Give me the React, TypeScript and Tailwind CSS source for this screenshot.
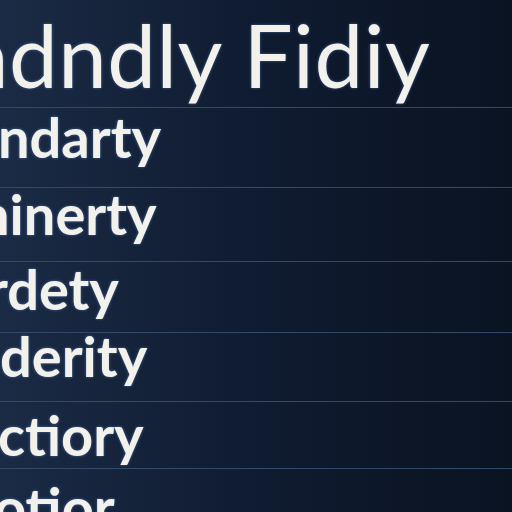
import React from "react";

// One row of the list: clipped at the left edge, baseline placed by bottom padding
interface ListRow {
    text: string;
    height: string;
    pad: string;
    shift: string;
}

const rows: ListRow[] = [
    { text: "ndarty", height: "h-[80px]", pad: "pb-[22px]", shift: "-ml-[2px]" },
    { text: "ninerty", height: "h-[74px]", pad: "pb-[19px]", shift: "-ml-[22px]" },
    { text: "rdety", height: "h-[71px]", pad: "pb-[15px]", shift: "-ml-[13px]" },
    { text: "derity", height: "h-[69px]", pad: "pb-[17px]", shift: "ml-0" },
    { text: "ctiory", height: "h-[67px]", pad: "pb-[5px]", shift: "-ml-[2px]" },
];

export default function App() {
    return (
        <div className="w-[512px] h-[512px] overflow-hidden bg-linear-to-r from-[#1b2b45] via-[#0f1b30] to-[#0a1322] text-[#f3f1ec] font-['Lato','Open_Sans',sans-serif] [text-shadow:0_0_3px_rgba(110,160,240,0.55)]">
            {/* Heading row */}
            <div className="h-[108px] flex items-end border-b border-[#33496a] whitespace-nowrap overflow-hidden">
                <span className="-ml-[40px] pb-[9px] text-[87px] leading-none font-normal tracking-[0.5px]">
                    ndndly Fidiy
                </span>
            </div>

            {rows.map((row) => (
                <div
                    key={row.text}
                    className={`${row.height} flex items-end border-b border-[#33496a] whitespace-nowrap overflow-hidden`}
                >
                    <span className={`${row.shift} ${row.pad} text-[56px] leading-none font-bold`}>
                        {row.text}
                    </span>
                </div>
            ))}

            {/* Last row, cut by the bottom of the window */}
            <div className="h-[43px] whitespace-nowrap overflow-hidden">
                <span className="block -ml-[6px] pt-[10px] text-[56px] leading-none font-bold">
                    otior
                </span>
            </div>
        </div>
    );
}
